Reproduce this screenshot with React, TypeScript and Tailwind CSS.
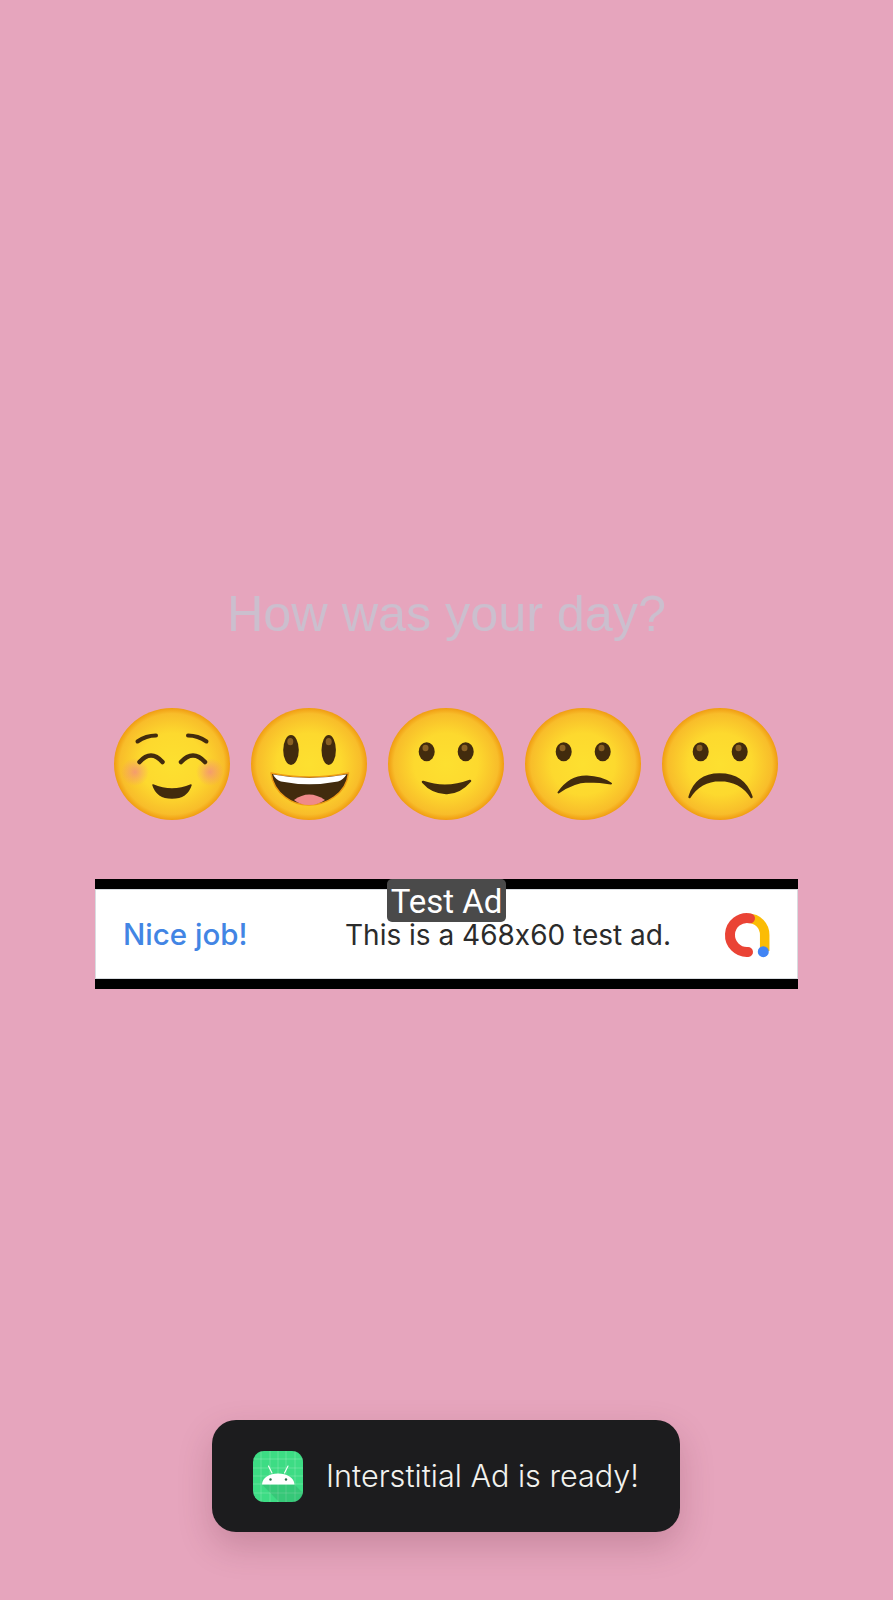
const brown = "#422b0d";

const Face = ({ id, children }: { id: string; children: React.ReactNode }) => (
  <svg width="118" height="114" viewBox="0 0 118 114" className="shrink-0">
    <defs>
      <radialGradient id={id} cx="50%" cy="50%" r="50%">
        <stop offset="0%" stopColor="#fde030" />
        <stop offset="55%" stopColor="#fdd92e" />
        <stop offset="90%" stopColor="#f8bd2a" />
        <stop offset="100%" stopColor="#f09c12" />
      </radialGradient>
    </defs>
    <ellipse cx="59" cy="57" rx="58" ry="56" fill={`url(#${id})`} />
    {children}
  </svg>
);

const Eyes = () => (
  <>
    <ellipse cx="39.7" cy="44.7" rx="8" ry="9.5" fill={brown} />
    <ellipse cx="78.7" cy="44.7" rx="8" ry="9.5" fill={brown} />
    <ellipse cx="38.5" cy="41" rx="3" ry="3.2" fill="#896024" />
    <ellipse cx="77.5" cy="41" rx="3" ry="3.2" fill="#896024" />
  </>
);

const Blushing = () => (
  <Face id="f1">
    <defs>
      <radialGradient id="blush">
        <stop offset="0%" stopColor="#f28b82" stopOpacity="0.75" />
        <stop offset="100%" stopColor="#f28b82" stopOpacity="0" />
      </radialGradient>
    </defs>
    <circle cx="22" cy="65" r="14" fill="url(#blush)" />
    <circle cx="97" cy="65" r="14" fill="url(#blush)" />
    <g fill="none" stroke={brown} strokeWidth="4" strokeLinecap="round">
      <path d="M24.5 34.5 Q33 28.5 43 28.5" />
      <path d="M75 28.5 Q85 28.5 93.5 34.5" />
      <path d="M26.5 55 Q38 42 49.5 55" strokeWidth="4.5" />
      <path d="M68 55 Q80 42 92 55" strokeWidth="4.5" />
    </g>
    <path d="M40 78 Q59 86 78 78 Q74 91 59 91 Q44 91 40 78 Z" fill={brown} stroke={brown} strokeWidth="1.5" strokeLinejoin="round" />
  </Face>
);

const Grinning = () => (
  <Face id="f2">
    <ellipse cx="41" cy="43" rx="7.8" ry="15" fill={brown} />
    <ellipse cx="78.7" cy="43" rx="7.2" ry="15" fill={brown} />
    <ellipse cx="40.3" cy="34.7" rx="3" ry="3.6" fill="#896024" />
    <ellipse cx="78.7" cy="34.7" rx="3" ry="3.6" fill="#896024" />
    <path d="M21 66 Q59 74 98.5 66 Q97 81 84 90 Q73 98 59 98 Q45 98 35 90 Q23 81 21 66 Z" fill={brown} stroke="#ed9a14" strokeWidth="1.5" strokeLinejoin="round" />
    <path d="M23 67.5 Q59 74.5 96.5 67.5 Q93 73 88 74.5 Q59 80 31 74.5 Q26 73 23 67.5 Z" fill="#ffffff" />
    <path d="M44 93 Q59 82 75 93 Q68 98 59 98 Q50 98 44 93 Z" fill="#ef8a8a" />
  </Face>
);

const Smiling = () => (
  <Face id="f3">
    <Eyes />
    <path d="M36 75 Q59 83 83 74 Q72 86.5 59 86 Q45 85.5 36 75 Z" fill={brown} stroke={brown} strokeWidth="2.5" strokeLinejoin="round" />
  </Face>
);

const Confused = () => (
  <Face id="f4">
    <Eyes />
    <path d="M34.5 85.5 Q46 69 63 69.5 Q77 70 87 76.5 Q76 74.5 64 74.5 Q49 75 34.5 85.5 Z" fill={brown} stroke={brown} strokeWidth="2" strokeLinejoin="round" />
  </Face>
);

const Frowning = () => (
  <Face id="f5">
    <Eyes />
    <path d="M28.5 90 Q35 67.5 58.5 67.5 Q83 67.5 90.5 90 Q80 73.5 59 73 Q39 73.5 28.5 90 Z" fill={brown} stroke={brown} strokeWidth="2.4" strokeLinejoin="round" />
  </Face>
);

const AdMobLogo = () => (
  <svg width="80" height="70" viewBox="0 0 80 70" className="mb-[7px] shrink-0">
    <path d="M38 22.3 C48 22.3 54.7 30 54.7 39 L54.7 55" fill="none" stroke="#fbbc05" strokeWidth="9.5" />
    <path d="M40 22.3 A17 17 0 1 0 38 56" fill="none" stroke="#ea4335" strokeWidth="10" strokeLinecap="round" />
    <circle cx="53.3" cy="55.7" r="5.5" fill="#4285f4" />
  </svg>
);

const AndroidIcon = () => (
  <svg width="50" height="51" viewBox="0 0 50 51" className="shrink-0">
    <rect width="50" height="51" rx="11" fill="#3ddc84" />
    <g stroke="#ffffff" strokeOpacity="0.28" strokeWidth="0.7">
      <path d="M8 0V51M17 0V51M25 0V51M33 0V51M42 0V51" />
      <path d="M0 8H50M0 17H50M0 25H50M0 33H50M0 42H50" />
    </g>
    <path d="M9 33.5 H41.5 L50 42 V40 Q50 51 39 51 H26 Z" fill="#1f7a4a" fillOpacity="0.2" />
    <path d="M15.5 15 L19 22 M35 15 L31.5 22" stroke="#ffffff" strokeWidth="1.1" strokeLinecap="round" />
    <path d="M9 33.5 C9.5 26.5 16 22.5 25 22.5 C34 22.5 41 26.5 41.5 33.5 Z" fill="#ffffff" />
    <circle cx="17.5" cy="28.5" r="1.2" fill="#2c6b4a" />
    <circle cx="33" cy="28.5" r="1.2" fill="#2c6b4a" />
  </svg>
);

export default function App() {
  return (
    <div className="flex h-[1600px] flex-col items-center overflow-hidden bg-[#e6a5bd]">
      <h1 className="mt-[586px] h-[56px] font-['Liberation_Sans',sans-serif] text-[50.3px] leading-[56px] font-normal text-[#cbbfce]">
        How was your day?
      </h1>

      <div className="mt-[65px] flex -translate-x-[1px] gap-[19px]">
        <Blushing />
        <Grinning />
        <Smiling />
        <Confused />
        <Frowning />
      </div>

      <div className="relative mt-[58px] flex h-[110px] w-[703px] items-center border-y-[10px] border-black bg-white pl-[28px] shadow-[inset_0_0_0_1px_#d9dce0]">
        <span className="mt-[1px] w-[222px] font-['Inter',sans-serif] text-[29.5px] font-medium text-[#4285e4]">Nice job!</span>
        <span className="mt-[1px] font-['Inter',sans-serif] text-[28px] whitespace-nowrap text-[#2b2b2b] [font-feature-settings:'calt'_0]">This is a 468x60 test ad.</span>
        <div className="absolute top-[-10px] left-[292px] flex h-[43px] w-[119px] items-center justify-center rounded-[5px] bg-[#4a4a4a] pt-[2px] font-['Roboto',sans-serif] text-[33px] text-white">
          Test Ad
        </div>
        <div className="ml-auto mr-[8px] flex">
          <AdMobLogo />
        </div>
      </div>

      <div className="mt-[431px] mr-[1px] flex h-[112px] w-[468px] items-center gap-[23px] rounded-[24px] bg-[#1c1c1e] pl-[41px] shadow-[0_14px_34px_rgba(90,30,50,0.22)]">
        <AndroidIcon />
        <span className="font-['Inter',sans-serif] text-[30.6px] font-light whitespace-nowrap text-[#f2f2ee]">Interstitial Ad is ready!</span>
      </div>
    </div>
  );
}
